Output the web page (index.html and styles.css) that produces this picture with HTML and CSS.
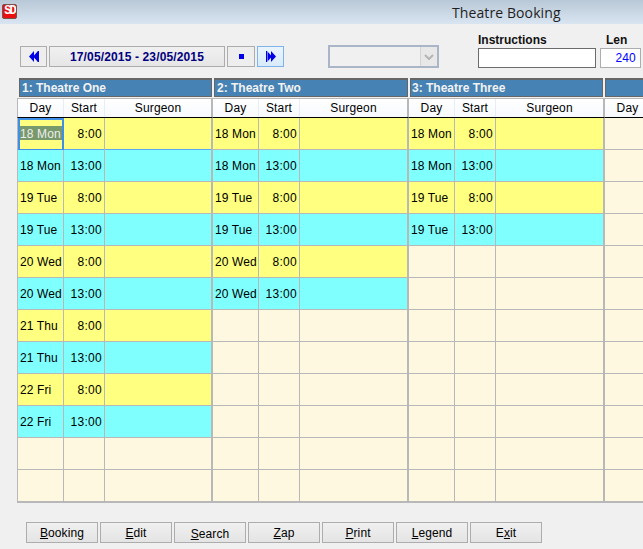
FILE: index.html
```html
<!DOCTYPE html>
<html lang="en">
<head>
<meta charset="utf-8">
<title>Theatre Booking</title>
<link rel="stylesheet" href="styles.css">
</head>
<body>
<header class="titlebar">
  <span class="logo">SD</span>
  <span class="title">Theatre Booking</span>
</header>
<section class="toolbar">
  <div class="nav">
    <button class="nav-btn"><svg width="10" height="11" viewBox="0 0 10 11"><path d="M0 5.5 5 0V11ZM4 5.5 9 0V11ZM8.500 0H10V11H8.500Z" fill="#0000e6"/></svg></button>
    <button class="date-btn">17/05/2015 - 23/05/2015</button>
    <button class="nav-btn stop"><span class="square"></span></button>
    <button class="nav-btn hot"><svg width="10" height="11" viewBox="0 0 10 11"><path d="M10 5.5 5 0V11ZM6 5.5 1 0V11ZM0 0H1.500V11H0Z" fill="#0000e6"/></svg></button>
  </div>
  <div class="combo"><span class="combo-arrow"><svg width="10" height="6" viewBox="0 0 10 6"><path d="M1 1 5 5 9 1" fill="none" stroke="#b4b4b4" stroke-width="2"/></svg></span></div>
  <div class="field instructions"><label>Instructions</label><div class="box"></div></div>
  <div class="field len"><label>Len</label><div class="box num">240</div></div>
</section>
<main class="board">
  <section class="panel">
    <h2 class="bar">1: Theatre One</h2>
    <div class="row head"><span>Day</span><span>Start</span><span>Surgeon</span></div>
    <div class="row am focus-row"><span class="day focus"><b>18 Mon</b></span><span class="start">8:00</span><span></span></div>
    <div class="row pm"><span class="day">18 Mon</span><span class="start">13:00</span><span></span></div>
    <div class="row am"><span class="day">19 Tue</span><span class="start">8:00</span><span></span></div>
    <div class="row pm"><span class="day">19 Tue</span><span class="start">13:00</span><span></span></div>
    <div class="row am"><span class="day">20 Wed</span><span class="start">8:00</span><span></span></div>
    <div class="row pm"><span class="day">20 Wed</span><span class="start">13:00</span><span></span></div>
    <div class="row am"><span class="day">21 Thu</span><span class="start">8:00</span><span></span></div>
    <div class="row pm"><span class="day">21 Thu</span><span class="start">13:00</span><span></span></div>
    <div class="row am"><span class="day">22 Fri</span><span class="start">8:00</span><span></span></div>
    <div class="row pm"><span class="day">22 Fri</span><span class="start">13:00</span><span></span></div>
    <div class="row"><span></span><span></span><span></span></div>
    <div class="row"><span></span><span></span><span></span></div>
  </section>
  <section class="panel">
    <h2 class="bar">2: Theatre Two</h2>
    <div class="row head"><span>Day</span><span>Start</span><span>Surgeon</span></div>
    <div class="row am"><span class="day">18 Mon</span><span class="start">8:00</span><span></span></div>
    <div class="row pm"><span class="day">18 Mon</span><span class="start">13:00</span><span></span></div>
    <div class="row am"><span class="day">19 Tue</span><span class="start">8:00</span><span></span></div>
    <div class="row pm"><span class="day">19 Tue</span><span class="start">13:00</span><span></span></div>
    <div class="row am"><span class="day">20 Wed</span><span class="start">8:00</span><span></span></div>
    <div class="row pm"><span class="day">20 Wed</span><span class="start">13:00</span><span></span></div>
    <div class="row"><span></span><span></span><span></span></div>
    <div class="row"><span></span><span></span><span></span></div>
    <div class="row"><span></span><span></span><span></span></div>
    <div class="row"><span></span><span></span><span></span></div>
    <div class="row"><span></span><span></span><span></span></div>
    <div class="row"><span></span><span></span><span></span></div>
  </section>
  <section class="panel third">
    <h2 class="bar">3: Theatre Three</h2>
    <div class="row head"><span>Day</span><span>Start</span><span>Surgeon</span></div>
    <div class="row am"><span class="day">18 Mon</span><span class="start">8:00</span><span></span></div>
    <div class="row pm"><span class="day">18 Mon</span><span class="start">13:00</span><span></span></div>
    <div class="row am"><span class="day">19 Tue</span><span class="start">8:00</span><span></span></div>
    <div class="row pm"><span class="day">19 Tue</span><span class="start">13:00</span><span></span></div>
    <div class="row"><span></span><span></span><span></span></div>
    <div class="row"><span></span><span></span><span></span></div>
    <div class="row"><span></span><span></span><span></span></div>
    <div class="row"><span></span><span></span><span></span></div>
    <div class="row"><span></span><span></span><span></span></div>
    <div class="row"><span></span><span></span><span></span></div>
    <div class="row"><span></span><span></span><span></span></div>
    <div class="row"><span></span><span></span><span></span></div>
  </section>
  <section class="panel fourth">
    <h2 class="bar">&nbsp;</h2>
    <div class="row head"><span>Day</span></div>
    <div class="row"><span></span></div>
    <div class="row"><span></span></div>
    <div class="row"><span></span></div>
    <div class="row"><span></span></div>
    <div class="row"><span></span></div>
    <div class="row"><span></span></div>
    <div class="row"><span></span></div>
    <div class="row"><span></span></div>
    <div class="row"><span></span></div>
    <div class="row"><span></span></div>
    <div class="row"><span></span></div>
    <div class="row"><span></span></div>
  </section>
</main>
<footer class="actions">
  <button><u>B</u>ooking</button>
  <button><u>E</u>dit</button>
  <button class="low"><u>S</u>earch</button>
  <button><u>Z</u>ap</button>
  <button><u>P</u>rint</button>
  <button><u>L</u>egend</button>
  <button>E<u>x</u>it</button>
</footer>
</body>
</html>
```
FILE: styles.css
```css
* { box-sizing: border-box; }
html, body { margin: 0; height: 100%; }
body {
  width: 643px;
  height: 549px;
  overflow: hidden;
  background: #f0f0f0;
  font: 12px "Liberation Sans", Arial, sans-serif;
  color: #000;
}
.titlebar {
  height: 24px;
  display: flex;
  align-items: flex-start;
  background: linear-gradient(#b9c8d7, #d9e5f1);
}
.logo {
  width: 15px;
  height: 15px;
  margin: 4px 0 0 2px;
  background: #e81010;
  border: 1px solid #7a5048;
  border-radius: 2px;
  color: #fff;
  font: bold 12px/13px "Liberation Mono", monospace;
  letter-spacing: -2px;
  text-align: center;
  overflow: hidden;
}
.title {
  margin: 3px 0 0 435px;
  font: 14px "Open Sans", sans-serif;
  letter-spacing: .1px;
  color: #1f1f1f;
}
.toolbar {
  height: 54px;
  display: flex;
  align-items: flex-start;
  padding-left: 20px;
}
.nav {
  display: flex;
  gap: 2px;
  margin-top: 22px;
}
.nav button {
  width: 27px;
  height: 21px;
  padding: 0;
  border: 1px solid #adadad;
  background: #eeeeee;
  display: flex;
  align-items: center;
  justify-content: center;
}
.nav .date-btn {
  width: 176px;
  font: bold 12px "Liberation Sans", Arial, sans-serif;
  letter-spacing: .14px;
  color: #000080;
  background: linear-gradient(#f0f0f0, #e6e6e6);
}
.nav .stop { width: 28px; }
.nav .hot {
  background: linear-gradient(#eaf5fd, #d8ebfa);
  border-color: #7eb4ea;
}
.square {
  width: 5px;
  height: 5px;
  background: #0000e6;
}
.combo {
  width: 111px;
  height: 23px;
  margin: 21px 0 0 44px;
  border: 2px solid #aab6c8;
  background: #f0f0f0;
  display: flex;
  justify-content: flex-end;
}
.combo-arrow {
  width: 17px;
  border-left: 1px solid #d4d4d4;
  background: #e8e8e8;
  display: flex;
  align-items: center;
  justify-content: center;
}
.field label {
  display: block;
  font-weight: bold;
  height: 15px;
  line-height: 15px;
  color: #111;
}
.box {
  height: 20px;
  background: #fff;
  border: 1px solid #6b6b6b;
}
.instructions {
  width: 118px;
  margin: 9px 0 0 39px;
}
.len {
  width: 41px;
  margin: 9px 0 0 4px;
}
.len label { padding-left: 6px; }
.num {
  color: #0000ff;
  text-align: right;
  line-height: 19px;
  padding-right: 4px;
  border-color: #adadad;
  letter-spacing: .2px;
}
.board {
  display: grid;
  grid-template-columns: 195px 196px 196px 56px;
  margin-left: 17px;
  width: 626px;
  padding-bottom: 1px;
  overflow: hidden;
}
.panel { min-width: 0; }
.bar {
  margin: 0 0 1px 2px;
  height: 19px;
  background: #4682b4;
  border: 2px solid #666;
  border-width: 2px 1px 1px;
  color: #f2f2f2;
  font: bold 12px/16px "Liberation Sans", Arial, sans-serif;
  padding-left: 2px;
  white-space: nowrap;
}
.third .bar { margin-right: 1px; padding-left: 1px; }
.fourth .bar { margin-left: 1px; margin-right: -4px; }
.row {
  display: grid;
  grid-template-columns: 46px 41px 1fr;
  height: 32px;
  border-left: 1px solid #b8b8b8;
  border-bottom: 1px solid #b8b8b8;
  background: #fff8e1;
}
.row:last-child { box-shadow: 0 1px 0 #b8b8b8; }
.row > span {
  border-right: 1px solid #b8b8b8;
  padding-top: 1px;
  line-height: 31px;
  letter-spacing: .12px;
  white-space: nowrap;
}
.row .day { padding-left: 2px; }
.row .start {
  text-align: right;
  padding-right: 2px;
  letter-spacing: .3px;
}
.row.head {
  height: 20px;
  border-top: 1px solid #b8b8b8;
  border-bottom: 1px solid #000;
  background: linear-gradient(#ffffff, #f6f9fe);
}
.row.head > span {
  padding-top: 0;
  line-height: 18px;
  text-align: center;
  border-right-color: #e6edf8;
  letter-spacing: .15px;
}
.row.head > span:last-child { border-right-color: #b8b8b8; }
.am { background: #ffff80; }
.pm { background: #80ffff; }
.row.focus-row { border-bottom-color: #5aa9f5; }
.row .focus {
  border: 2px solid #3d8fe8;
  border-bottom-width: 1px;
  padding: 6px 0 0 0;
  line-height: 16px;
  display: block;
}
.focus b {
  display: block;
  height: 14px;
  font-weight: normal;
  background: #78996b;
  color: #eeeeee;
}
.actions {
  display: flex;
  gap: 2px;
  margin: 19px 0 0 26px;
}
.actions button {
  width: 72px;
  height: 21px;
  padding: 0;
  border: 1px solid #adadad;
  background: linear-gradient(#f0f0f0, #e4e4e4);
  font: 12px "Liberation Sans", Arial, sans-serif;
  letter-spacing: .1px;
  color: #000;
}
.actions .low { padding-top: 2px; }
```
